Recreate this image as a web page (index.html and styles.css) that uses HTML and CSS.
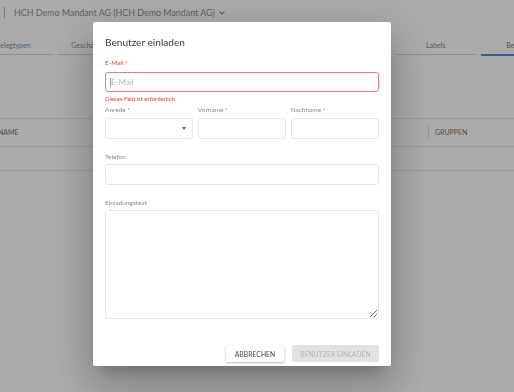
FILE: index.html
```html
<!DOCTYPE html>
<html lang="de">
<head>
    <meta charset="UTF-8">
    <meta name="viewport" content="width=device-width, initial-scale=1.0">
    <title>Benutzer einladen</title>
    <link rel="stylesheet" href="styles.css">
</head>
<body>
    <div class="page">
        <header class="topbar">
            <span class="divider"></span>
            <span class="tenant">HCH Demo Mandant AG (HCH Demo Mandant AG)</span>
            <svg class="chevron" width="6" height="4" viewBox="0 0 6 4"><path d="M0.6 0.6 L3 3 L5.4 0.6" fill="none" stroke="#8a9099" stroke-width="1.1"/></svg>
        </header>
        <nav class="tabs">
            <div class="tab">Belegtypen</div>
            <div class="tab">Geschäftspartner</div>
            <div class="tab">Kostenstellen</div>
            <div class="tab">Steuersätze</div>
            <div class="tab">Zahlungsarten</div>
            <div class="tab">Labels</div>
            <div class="tab active">Benutzer</div>
        </nav>
        <div class="table">
            <div class="thead">
                <div class="th name">NAME</div>
                <div class="th groups">GRUPPEN</div>
            </div>
            <div class="row"></div>
        </div>
    </div>

    <div class="overlay">
        <div class="dialog">
            <h1 class="dialog-title">Benutzer einladen</h1>

            <label class="label invalid">E-Mail *</label>
            <div class="input-wrap">
                <input class="input input-invalid" type="email" placeholder="E-Mail">
                <span class="text-caret"></span>
            </div>
            <div class="error">Dieses Feld ist erforderlich</div>

            <div class="name-row">
                <div class="col">
                    <label class="label">Anrede *</label>
                    <div class="select"><span class="select-arrow"></span></div>
                </div>
                <div class="col">
                    <label class="label">Vorname *</label>
                    <input class="input input-row" type="text">
                </div>
                <div class="col">
                    <label class="label">Nachname *</label>
                    <input class="input input-row" type="text">
                </div>
            </div>

            <label class="label spaced">Telefon</label>
            <input class="input input-row" type="text">

            <label class="label spaced">Einladungstext</label>
            <textarea class="textarea"></textarea>

            <div class="actions">
                <button class="btn btn-cancel">Abbrechen</button>
                <button class="btn btn-primary" disabled>Benutzer einladen</button>
            </div>
        </div>
    </div>
</body>
</html>
```

FILE: styles.css
```css
* {
    box-sizing: border-box;
}
body {
    margin: 0;
    width: 514px;
    height: 392px;
    overflow: hidden;
    background-color: #fff;
    font-family: Lato, "Open Sans", Arial, sans-serif;
    color: #333;
}

/* background page */
.page {
    width: 514px;
    overflow: hidden;
}
.topbar {
    display: flex;
    align-items: center;
    height: 24px;
    padding-left: 4px;
}
.divider {
    width: 1px;
    height: 11px;
    background-color: #b0b0b0;
}
.tenant {
    margin-left: 9px;
    font-size: 8.9px;
    color: #8a9099;
}
.chevron {
    margin-left: 4px;
    margin-top: 1px;
}
.tabs {
    display: flex;
    gap: 5px;
    margin-top: 12px;
    margin-left: -26.5px;
}
.tab {
    flex: 0 0 79.5px;
    height: 19px;
    display: flex;
    justify-content: center;
    align-items: center;
    font-size: 7px;
    color: #8a8a8a;
    white-space: nowrap;
    border-bottom: 1px solid #d6d6d6;
}
.tab.active {
    height: 20px;
    border-bottom: 2px solid #4a8fe0;
    color: #7a7a7a;
}
.table {
    margin-top: 62px;
}
.thead {
    display: flex;
    align-items: center;
    height: 29px;
    padding-bottom: 2px;
    border-top: 1px solid #e6e6e6;
    border-bottom: 1px solid #e6e6e6;
}
.th {
    font-size: 7px;
    color: #777;
}
.th.name {
    margin-left: -2px;
}
.th.groups {
    margin-left: auto;
    width: 86px;
    height: 16px;
    display: flex;
    align-items: center;
    padding-left: 6px;
    border-left: 1px solid #dcdcdc;
}
.row {
    height: 24px;
    border-bottom: 1px solid #e6e6e6;
}

/* dialog */
.overlay {
    position: fixed;
    inset: 0;
    display: flex;
    align-items: flex-start;
    padding: 22px 0 0 93px;
    background-color: rgba(0, 0, 0, 0.33);
}
.dialog {
    width: 298px;
    height: 344px;
    display: flex;
    flex-direction: column;
    padding: 13px 12px 4px;
    background-color: #fff;
    border-radius: 2px;
    box-shadow: 0 11px 15px -7px rgba(0, 0, 0, 0.2), 0 24px 38px 3px rgba(0, 0, 0, 0.14), 0 9px 46px 8px rgba(0, 0, 0, 0.12);
}
.dialog-title {
    margin: 0;
    font-size: 10.1px;
    line-height: 14px;
    font-weight: 400;
    color: #3a3a3a;
}
.label {
    display: block;
    font-size: 6.5px;
    line-height: 10px;
    color: #858a96;
}
.label.invalid {
    margin-top: 9px;
    color: #e23b3b;
}
.label.spaced {
    margin-top: 13px;
}
.input-wrap {
    position: relative;
    margin-top: 4px;
}
.input {
    display: block;
    width: 100%;
    height: 20px;
    padding: 0 5px;
    border: 1px solid #e6e6e6;
    border-radius: 3px;
    font-family: inherit;
    font-size: 8px;
    color: #333;
    outline: none;
    background: #fff;
}
.input::placeholder {
    color: #b8b8b8;
}
.input-invalid {
    border-color: #ee7b7b;
}
.input-row {
    height: 21px;
    margin-top: 2px;
}
.text-caret {
    position: absolute;
    left: 4.5px;
    top: 5.5px;
    width: 1px;
    height: 9px;
    background-color: #999;
}
.error {
    margin-top: 2px;
    font-size: 6px;
    line-height: 9px;
    color: #e23b3b;
}
.name-row {
    display: grid;
    grid-template-columns: 1fr 1fr 1fr;
    gap: 4.5px;
    margin-top: 2px;
}
.name-row .input-row {
    margin-top: 3px;
}
.select {
    height: 21px;
    margin-top: 3px;
    display: flex;
    align-items: center;
    justify-content: flex-end;
    padding-right: 6px;
    border: 1px solid #e6e6e6;
    border-radius: 3px;
}
.select-arrow {
    width: 0;
    height: 0;
    border-left: 2.5px solid transparent;
    border-right: 2.5px solid transparent;
    border-top: 3px solid #666;
}
.textarea {
    display: block;
    width: 100%;
    height: 109px;
    margin-top: 2px;
    border: 1px solid #e6e6e6;
    border-radius: 3px;
    font-family: inherit;
    outline: none;
}
.actions {
    margin-top: auto;
    display: flex;
    justify-content: flex-end;
    gap: 8px;
}
.btn {
    height: 17px;
    padding: 0;
    border: none;
    border-radius: 2px;
    font-family: inherit;
    font-size: 6.7px;
    text-transform: uppercase;
    letter-spacing: 0.1px;
}
.btn-cancel {
    width: 58px;
    background-color: #fff;
    color: #444;
    box-shadow: 0 1px 3px rgba(0, 0, 0, 0.22), 0 1px 1px rgba(0, 0, 0, 0.08);
}
.btn-primary {
    width: 87px;
    background-color: #e2e2e2;
    color: #b3b3b3;
}
```
